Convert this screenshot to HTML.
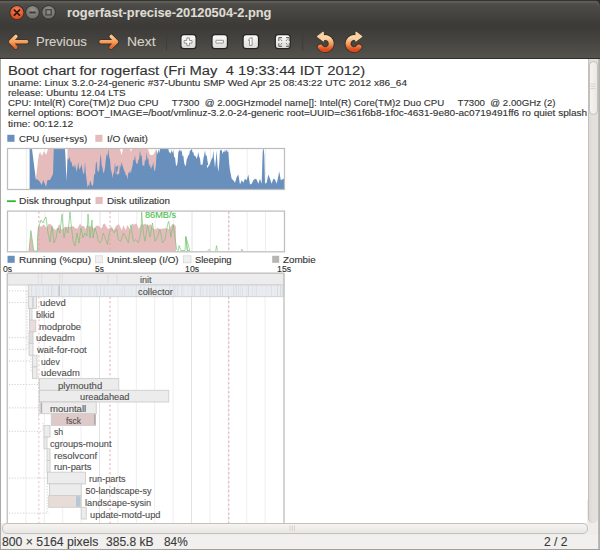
<!DOCTYPE html>
<html><head><meta charset="utf-8">
<style>
html,body{margin:0;padding:0;width:600px;height:550px;overflow:hidden;background:#3a3935;}
body{position:relative;font-family:"Liberation Sans",sans-serif;}
.abs{position:absolute;}
.t{position:absolute;white-space:pre;line-height:1;transform-origin:0 0;-webkit-text-stroke:0.12px currentColor;}
#titlebar{left:0;top:0;width:600px;height:26px;background:linear-gradient(#35342f 0px,#35342f 1px,#62615c 1px,#5a5954 2.5px,#4d4c48 4px,#3b3a36 26px);}
#toolbar{left:0;top:26px;width:600px;height:33px;background:linear-gradient(#3b3a36 0px,#43423e 12px,#4e4c47 24px,#55524d 31.5px,#302f2b 32px,#302f2b 33px);}
#content{left:1px;top:59px;width:587px;height:464px;background:#fff;overflow:hidden;}
#status{left:0;top:534px;width:600px;height:16px;background:#f1f0ee;}
#vtrough{left:588px;top:59px;width:10px;height:464px;background:linear-gradient(90deg,#dbd8d5 0px,#e2dfdc 3px,#e3e0dd 9px);border-left:1px solid #c3c0bc;box-sizing:border-box;border-radius:0 0 5px 5px;}
#vthumb{left:588.5px;top:60.5px;width:9px;height:54px;background:linear-gradient(90deg,#f4f3f1,#ebe9e6);border:1px solid #c4c1bc;box-sizing:border-box;border-radius:5px;}
#hbar{left:1.5px;top:523px;width:586px;height:10.5px;background:linear-gradient(#f5f4f2,#e9e7e4);border:1px solid #c4c1bc;box-sizing:border-box;border-radius:5px;}
#lborder{left:0;top:59px;width:1px;height:491px;background:#aaa9a7;}
#rborder{left:598px;top:59px;width:2px;height:491px;background:linear-gradient(90deg,#c4c1bd,#aeaaa6);}
#bborder{left:0;top:549px;width:600px;height:1px;background:#a19f9b;}
</style></head><body>
<div id="titlebar" class="abs"></div>
<div id="toolbar" class="abs"></div>
<div id="content" class="abs"></div>
<svg class="abs" style="left:0;top:0" width="600" height="550" viewBox="0 0 600 550">
<defs><clipPath id="cc"><rect x="1" y="59" width="587" height="464"/></clipPath></defs>
<g clip-path="url(#cc)">
<rect x="7.3" y="134.8" width="7.2" height="7" fill="#6990bd"/>
<rect x="95.3" y="134.8" width="7.2" height="7" fill="#e5bbbb"/>
<rect x="7" y="200.3" width="8.8" height="1.8" fill="#33b533"/>
<rect x="95.5" y="197" width="7.2" height="7" fill="#e5bbbb"/>
<rect x="7.5" y="255.8" width="7.2" height="7" fill="#6990bd"/>
<rect x="95.5" y="255.8" width="7" height="7" fill="#f0f0f0" stroke="#d8d8d8" stroke-width="0.8"/>
<rect x="183.5" y="255.8" width="7.5" height="7" fill="#f0f0f0" stroke="#d8d8d8" stroke-width="0.8"/>
<rect x="272.2" y="255.8" width="7" height="7" fill="#b5b5b5"/>
<line x1="26.40" y1="149" x2="26.40" y2="189" stroke="#eeeeee" stroke-width="1"/>
<line x1="44.80" y1="149" x2="44.80" y2="189" stroke="#eeeeee" stroke-width="1"/>
<line x1="63.20" y1="149" x2="63.20" y2="189" stroke="#eeeeee" stroke-width="1"/>
<line x1="81.60" y1="149" x2="81.60" y2="189" stroke="#eeeeee" stroke-width="1"/>
<line x1="100.00" y1="149" x2="100.00" y2="189" stroke="#e2e2e2" stroke-width="1"/>
<line x1="118.40" y1="149" x2="118.40" y2="189" stroke="#eeeeee" stroke-width="1"/>
<line x1="136.80" y1="149" x2="136.80" y2="189" stroke="#eeeeee" stroke-width="1"/>
<line x1="155.20" y1="149" x2="155.20" y2="189" stroke="#eeeeee" stroke-width="1"/>
<line x1="173.60" y1="149" x2="173.60" y2="189" stroke="#eeeeee" stroke-width="1"/>
<line x1="192.00" y1="149" x2="192.00" y2="189" stroke="#e2e2e2" stroke-width="1"/>
<line x1="210.40" y1="149" x2="210.40" y2="189" stroke="#eeeeee" stroke-width="1"/>
<line x1="228.80" y1="149" x2="228.80" y2="189" stroke="#eeeeee" stroke-width="1"/>
<line x1="247.20" y1="149" x2="247.20" y2="189" stroke="#eeeeee" stroke-width="1"/>
<line x1="265.60" y1="149" x2="265.60" y2="189" stroke="#eeeeee" stroke-width="1"/>
<polygon points="35.80,189.00 35.80,179.00 38.75,155.00 40.00,152.00 42.00,156.00 44.00,151.00 46.00,155.00 48.00,149.00 53.75,149.00 65.00,149.00 66.50,182.00 67.60,149.00 120.00,149.00 121.50,155.00 123.00,149.00 130.00,149.00 131.00,152.00 132.00,149.00 148.00,149.00 150.00,155.00 153.00,155.00 156.70,149.50 157.00,189.00" fill="#e5bbbb" />
<polygon points="29.60,189.00 29.60,149.00 32.00,149.00 35.80,179.00 38.30,180.00 40.00,182.00 41.70,185.00 43.30,180.00 46.00,187.00 47.50,180.00 50.00,180.00 53.00,174.00 53.75,149.00 65.00,149.00 66.50,182.00 67.60,158.70 68.40,160.12 69.20,156.72 70.00,158.67 70.83,162.55 71.67,162.00 72.50,167.29 73.33,165.33 74.17,168.25 75.00,163.67 75.83,168.23 76.67,172.00 77.50,167.08 78.33,162.00 79.17,169.94 80.00,167.83 80.83,167.31 81.67,163.67 82.50,170.07 83.33,173.67 84.17,173.39 85.00,161.17 85.83,173.57 86.67,180.33 87.50,187.44 88.33,184.50 89.17,186.52 90.00,180.53 90.83,182.00 91.67,184.99 92.50,186.17 93.33,183.73 94.17,173.67 95.00,174.71 95.83,163.45 96.67,161.17 97.50,171.03 98.33,172.00 99.17,169.92 100.00,159.55 100.83,153.67 101.67,165.30 102.50,167.83 103.33,173.46 104.17,172.00 105.00,167.70 105.83,159.67 106.67,153.67 107.50,156.36 108.33,148.67 109.17,156.92 110.00,159.50 110.83,170.06 111.67,172.00 112.50,178.11 113.33,173.67 114.17,172.12 115.00,162.00 115.83,172.53 116.67,172.00 117.50,171.04 118.33,165.33 115.00,167.83 115.83,174.72 116.67,172.00 117.50,175.50 118.33,173.67 119.17,174.28 120.00,163.67 120.83,168.11 121.67,162.00 122.50,165.50 123.33,167.83 124.17,170.73 125.00,172.00 125.83,174.97 126.67,175.33 127.50,179.46 128.33,172.00 129.17,173.78 130.00,170.33 130.83,173.26 131.67,168.67 132.50,165.89 133.33,159.50 134.17,160.46 135.00,155.33 135.83,161.82 136.67,163.67 137.50,164.11 138.33,160.33 139.17,158.84 140.00,150.33 140.83,156.34 141.67,155.33 142.50,165.76 143.33,165.33 144.17,166.51 145.00,159.50 145.83,161.32 146.67,152.00 147.50,160.06 148.33,157.83 149.17,166.70 150.00,163.67 150.83,169.36 151.67,167.00 152.50,165.48 153.33,162.00 154.17,171.33 155.00,170.33 155.83,165.70 156.67,149.50 157.50,154.72 158.33,149.00 159.17,153.16 160.00,148.67 160.00,148.67 168.33,148.67 169.17,152.82 170.00,152.00 170.83,153.72 171.67,149.50 172.50,153.10 173.33,150.33 174.17,157.44 175.00,157.00 175.83,164.54 176.67,166.17 177.50,162.77 178.33,152.00 179.17,150.87 180.00,149.50 180.83,151.78 181.67,150.33 182.50,156.61 183.33,155.33 184.17,162.93 185.00,165.33 185.83,166.02 186.67,159.50 187.50,157.87 188.33,155.33 189.17,154.71 190.00,150.33 190.83,150.49 191.67,148.67 192.50,152.51 193.33,152.00 194.17,155.96 195.00,155.33 195.83,157.05 196.67,158.67 197.50,156.20 198.33,152.00 199.17,156.45 200.00,158.67 200.83,165.25 201.67,164.50 202.50,164.65 203.33,158.67 204.17,155.14 205.00,150.33 205.83,156.02 206.67,155.33 207.50,160.89 208.33,165.33 206.67,165.33 207.50,168.22 208.33,166.17 209.17,165.42 210.00,163.67 210.83,161.17 211.67,158.67 212.50,157.99 213.33,150.33 214.17,159.92 215.00,167.83 215.83,159.95 216.67,150.33 217.50,165.10 218.33,172.00 219.17,164.24 220.00,149.50 220.83,150.66 221.67,149.50 222.50,154.18 223.33,151.17 224.17,152.49 225.00,149.50 225.83,152.21 226.67,149.50 227.50,151.57 228.33,152.00 229.17,163.67 230.00,170.33 231.67,178.67 233.33,180.33 235.00,182.83 236.67,177.00 238.33,174.50 240.00,184.50 241.67,180.33 243.33,182.83 245.00,178.67 246.67,180.33 248.33,174.50 250.00,184.50 251.67,183.67 253.33,180.33 255.00,178.67 256.67,179.50 258.33,183.67 260.00,178.67 261.67,183.67 262.67,152.00 263.17,148.67 263.67,148.67 264.33,155.33 265.00,183.67 266.67,182.83 268.33,174.50 270.00,178.67 271.67,183.67 273.33,178.67 275.00,179.50 276.67,183.67 278.33,176.17 279.17,171.17 280.83,180.33 283.33,178.67 284.00,178.70 284.00,189.00" fill="#6990bd" />
<rect x="7.5" y="148.5" width="277" height="41" fill="none" stroke="#bdbdbd" stroke-width="1.25"/>
<line x1="26.40" y1="211.6" x2="26.40" y2="251.3" stroke="#eeeeee" stroke-width="1"/>
<line x1="44.80" y1="211.6" x2="44.80" y2="251.3" stroke="#eeeeee" stroke-width="1"/>
<line x1="63.20" y1="211.6" x2="63.20" y2="251.3" stroke="#eeeeee" stroke-width="1"/>
<line x1="81.60" y1="211.6" x2="81.60" y2="251.3" stroke="#eeeeee" stroke-width="1"/>
<line x1="100.00" y1="211.6" x2="100.00" y2="251.3" stroke="#e2e2e2" stroke-width="1"/>
<line x1="118.40" y1="211.6" x2="118.40" y2="251.3" stroke="#eeeeee" stroke-width="1"/>
<line x1="136.80" y1="211.6" x2="136.80" y2="251.3" stroke="#eeeeee" stroke-width="1"/>
<line x1="155.20" y1="211.6" x2="155.20" y2="251.3" stroke="#eeeeee" stroke-width="1"/>
<line x1="173.60" y1="211.6" x2="173.60" y2="251.3" stroke="#eeeeee" stroke-width="1"/>
<line x1="192.00" y1="211.6" x2="192.00" y2="251.3" stroke="#e2e2e2" stroke-width="1"/>
<line x1="210.40" y1="211.6" x2="210.40" y2="251.3" stroke="#eeeeee" stroke-width="1"/>
<line x1="228.80" y1="211.6" x2="228.80" y2="251.3" stroke="#eeeeee" stroke-width="1"/>
<line x1="247.20" y1="211.6" x2="247.20" y2="251.3" stroke="#eeeeee" stroke-width="1"/>
<line x1="265.60" y1="211.6" x2="265.60" y2="251.3" stroke="#eeeeee" stroke-width="1"/>
<polygon points="29.00,251.30 30.90,230.60 33.80,251.30 37.40,251.30 37.60,228.00 38.60,226.47 41.60,226.46 43.60,224.59 46.60,227.71 48.60,223.96 51.00,224.29 52.60,227.47 55.60,230.05 57.60,227.66 59.20,223.72 61.20,229.46 62.80,228.75 65.20,226.38 67.20,226.93 69.60,226.80 71.20,226.50 73.60,226.15 75.20,228.25 77.60,228.61 80.00,223.51 81.60,226.10 84.00,226.01 85.60,229.23 87.20,224.79 88.80,226.59 91.80,226.24 93.80,228.75 96.20,225.66 98.60,225.63 101.60,228.61 103.20,224.24 104.80,223.38 107.80,228.88 109.80,228.07 111.80,226.43 113.80,230.20 115.80,226.23 118.80,224.12 121.80,230.23 123.40,225.19 125.80,230.29 127.40,224.77 130.40,230.27 132.00,223.59 134.00,224.79 136.40,223.37 138.80,229.11 141.80,223.81 143.40,224.76 145.40,223.41 147.80,225.90 150.80,224.19 153.80,229.13 155.80,229.37 157.80,227.69 160.20,229.66 162.20,228.38 164.20,228.48 166.20,228.11 169.20,229.48 170.80,226.25 172.40,224.06 174.80,224.97 175.80,226.50 176.00,251.30" fill="#e5bbbb" />
<polyline points="29.00,251.00 30.90,230.60 33.80,251.00 37.40,251.00 37.50,238.00 39.00,226.00 41.00,220.00 43.00,223.00 45.00,218.00 46.00,217.00 48.00,233.00 50.00,242.00 52.00,226.00 54.00,243.00 56.00,238.00 58.00,228.00 60.00,233.00 62.00,214.00 64.00,238.00 66.00,228.00 68.00,233.00 70.00,212.00 71.00,223.00 73.00,241.00 75.00,246.00 77.00,233.00 79.00,243.00 81.00,228.00 83.00,238.00 85.00,233.00 87.00,236.00 88.00,214.00 90.00,238.00 92.00,220.00 93.00,238.00 95.00,228.00 96.67,233.00 98.33,241.33 100.00,243.00 101.67,239.67 103.33,233.00 105.83,239.67 107.50,244.67 109.17,233.00 111.67,228.83 114.17,233.00 116.67,228.83 118.33,239.67 120.83,241.33 123.33,233.00 125.83,237.17 128.33,243.00 130.83,224.67 133.33,241.33 135.83,239.67 138.33,243.00 140.83,233.00 141.67,212.17 143.33,233.00 145.00,241.33 147.50,224.67 150.00,237.17 152.50,223.00 155.00,241.33 157.50,237.17 160.00,228.83 162.50,243.00 165.00,239.67 167.50,224.67 168.75,221.33 170.83,237.17 173.33,224.67 175.00,237.17 176.67,249.67 178.33,250.50 179.17,245.50 180.83,250.50 185.00,250.50 185.83,236.33 187.08,250.50 189.83,250.50 185.88,236.90 187.63,250.91" fill="none" stroke="#72c472" stroke-width="0.9" stroke-linejoin="round" stroke-opacity="0.75"/>
<polyline points="207.77,250.91 209.17,249.16 210.39,250.91" fill="none" stroke="#72c472" stroke-width="0.9" stroke-linejoin="round" stroke-opacity="0.75"/>
<polyline points="215.65,250.91 216.52,245.65 217.40,250.91" fill="none" stroke="#72c472" stroke-width="0.9" stroke-linejoin="round" stroke-opacity="0.75"/>
<polyline points="241.04,250.91 241.92,249.16 242.79,250.91" fill="none" stroke="#72c472" stroke-width="0.9" stroke-linejoin="round" stroke-opacity="0.75"/>
<line x1="38.9" y1="211.6" x2="38.9" y2="251.3" stroke="#e2a4a4" stroke-width="1" stroke-dasharray="2,2.5"/>
<line x1="110" y1="211.6" x2="110" y2="251.3" stroke="#e2a4a4" stroke-width="1" stroke-dasharray="2,2.5"/>
<line x1="228.8" y1="211.6" x2="228.8" y2="251.3" stroke="#e2a4a4" stroke-width="1" stroke-dasharray="2,2.5"/>
<rect x="7.5" y="211.1" width="277" height="40.70000000000002" fill="none" stroke="#bdbdbd" stroke-width="1.25"/>
<line x1="25.90" y1="273.3" x2="25.90" y2="550" stroke="#eeeeee" stroke-width="1"/>
<line x1="44.30" y1="273.3" x2="44.30" y2="550" stroke="#eeeeee" stroke-width="1"/>
<line x1="62.70" y1="273.3" x2="62.70" y2="550" stroke="#eeeeee" stroke-width="1"/>
<line x1="81.10" y1="273.3" x2="81.10" y2="550" stroke="#eeeeee" stroke-width="1"/>
<line x1="99.50" y1="273.3" x2="99.50" y2="550" stroke="#e2e2e2" stroke-width="1"/>
<line x1="117.90" y1="273.3" x2="117.90" y2="550" stroke="#eeeeee" stroke-width="1"/>
<line x1="136.30" y1="273.3" x2="136.30" y2="550" stroke="#eeeeee" stroke-width="1"/>
<line x1="154.70" y1="273.3" x2="154.70" y2="550" stroke="#eeeeee" stroke-width="1"/>
<line x1="173.10" y1="273.3" x2="173.10" y2="550" stroke="#eeeeee" stroke-width="1"/>
<line x1="191.50" y1="273.3" x2="191.50" y2="550" stroke="#e2e2e2" stroke-width="1"/>
<line x1="209.90" y1="273.3" x2="209.90" y2="550" stroke="#eeeeee" stroke-width="1"/>
<line x1="228.30" y1="273.3" x2="228.30" y2="550" stroke="#eeeeee" stroke-width="1"/>
<line x1="246.70" y1="273.3" x2="246.70" y2="550" stroke="#eeeeee" stroke-width="1"/>
<line x1="265.10" y1="273.3" x2="265.10" y2="550" stroke="#eeeeee" stroke-width="1"/>
<line x1="38.9" y1="296.7" x2="38.9" y2="550" stroke="#e8bcbc" stroke-width="1" stroke-dasharray="2,2.5"/>
<line x1="110" y1="296.7" x2="110" y2="550" stroke="#e2a4a4" stroke-width="1" stroke-dasharray="2,2.5"/>
<line x1="228.8" y1="296.7" x2="228.8" y2="550" stroke="#e2a4a4" stroke-width="1" stroke-dasharray="2,2.5"/>
<line x1="9" y1="290.85" x2="28.3" y2="290.85" stroke="#c4c4c4" stroke-width="0.8" stroke-dasharray="1.2,1.6"/>
<line x1="9" y1="302.55" x2="27" y2="302.55" stroke="#c4c4c4" stroke-width="0.8" stroke-dasharray="1.2,1.6"/>
<line x1="9" y1="337.65" x2="28" y2="337.65" stroke="#c4c4c4" stroke-width="0.8" stroke-dasharray="1.2,1.6"/>
<line x1="9" y1="349.35" x2="28" y2="349.35" stroke="#c4c4c4" stroke-width="0.8" stroke-dasharray="1.2,1.6"/>
<line x1="9" y1="361.05" x2="31" y2="361.05" stroke="#c4c4c4" stroke-width="0.8" stroke-dasharray="1.2,1.6"/>
<line x1="9" y1="384.45" x2="38.5" y2="384.45" stroke="#c4c4c4" stroke-width="0.8" stroke-dasharray="1.2,1.6"/>
<line x1="9" y1="407.85" x2="40" y2="407.85" stroke="#c4c4c4" stroke-width="0.8" stroke-dasharray="1.2,1.6"/>
<line x1="9" y1="431.25" x2="43" y2="431.25" stroke="#c4c4c4" stroke-width="0.8" stroke-dasharray="1.2,1.6"/>
<line x1="9" y1="478.05" x2="46.5" y2="478.05" stroke="#c4c4c4" stroke-width="0.8" stroke-dasharray="1.2,1.6"/>
<line x1="9" y1="513.15" x2="48.5" y2="513.15" stroke="#c4c4c4" stroke-width="0.8" stroke-dasharray="1.2,1.6"/>
<line x1="27" y1="290.85" x2="27" y2="349.35" stroke="#c8c8c8" stroke-width="0.8" stroke-dasharray="1.2,1.6"/>
<line x1="31" y1="352.86" x2="31" y2="372.75" stroke="#c8c8c8" stroke-width="0.8" stroke-dasharray="1.2,1.6"/>
<line x1="38.5" y1="376.26" x2="38.5" y2="419.55" stroke="#c8c8c8" stroke-width="0.8" stroke-dasharray="1.2,1.6"/>
<line x1="43" y1="423.06" x2="43" y2="431.25" stroke="#c8c8c8" stroke-width="0.8" stroke-dasharray="1.2,1.6"/>
<line x1="47.2" y1="466.35" x2="47.2" y2="513.15" stroke="#c8c8c8" stroke-width="0.8" stroke-dasharray="1.2,1.6"/>
<rect x="7.40" y="273.30" width="276.60" height="11.70" fill="#ececec" stroke="#cdcdcd" stroke-width="0.9"/>
<rect x="28.30" y="285.00" width="255.70" height="11.70" fill="#e9ecf0" stroke="#cdcdcd" stroke-width="0.9"/>
<rect x="28.50" y="296.70" width="8.00" height="11.70" fill="#ececec" stroke="#cdcdcd" stroke-width="0.9"/>
<rect x="29.50" y="308.40" width="2.50" height="11.70" fill="#ececec" stroke="#cdcdcd" stroke-width="0.9"/>
<rect x="29.50" y="320.10" width="6.30" height="11.70" fill="#eadcdc" stroke="#cdcdcd" stroke-width="0.9"/>
<rect x="29.00" y="331.80" width="4.00" height="11.70" fill="#dedede" stroke="#cdcdcd" stroke-width="0.9"/>
<rect x="29.00" y="343.50" width="4.00" height="11.70" fill="#ececec" stroke="#cdcdcd" stroke-width="0.9"/>
<rect x="32.50" y="355.20" width="4.50" height="11.70" fill="#ececec" stroke="#cdcdcd" stroke-width="0.9"/>
<rect x="32.50" y="366.90" width="4.50" height="11.70" fill="#ececec" stroke="#cdcdcd" stroke-width="0.9"/>
<rect x="39.50" y="378.60" width="79.25" height="11.70" fill="#ececec" stroke="#cdcdcd" stroke-width="0.9"/>
<rect x="39.50" y="390.30" width="129.25" height="11.70" fill="#ececec" stroke="#cdcdcd" stroke-width="0.9"/>
<rect x="39.80" y="402.00" width="56.45" height="11.70" fill="#ececec" stroke="#cdcdcd" stroke-width="0.9"/>
<rect x="51.25" y="413.70" width="44.25" height="11.70" fill="#dfc8c8" stroke="#cdcdcd" stroke-width="0.9"/>
<rect x="44.00" y="425.40" width="6.00" height="11.70" fill="#ececec" stroke="#cdcdcd" stroke-width="0.9"/>
<rect x="44.00" y="437.10" width="3.00" height="11.70" fill="#ececec" stroke="#cdcdcd" stroke-width="0.9"/>
<rect x="47.00" y="448.80" width="3.00" height="11.70" fill="#ececec" stroke="#cdcdcd" stroke-width="0.9"/>
<rect x="47.00" y="460.50" width="3.00" height="11.70" fill="#ececec" stroke="#cdcdcd" stroke-width="0.9"/>
<rect x="47.50" y="472.20" width="38.00" height="11.70" fill="#ececec" stroke="#cdcdcd" stroke-width="0.9"/>
<rect x="49.50" y="483.90" width="31.75" height="11.70" fill="#ececec" stroke="#cdcdcd" stroke-width="0.9"/>
<rect x="48.75" y="495.60" width="32.50" height="11.70" fill="#e8dcd8" stroke="#cdcdcd" stroke-width="0.9"/>
<rect x="81.25" y="507.30" width="5.00" height="11.70" fill="#ececec" stroke="#cdcdcd" stroke-width="0.9"/>
<line x1="29.50" y1="285.60" x2="29.50" y2="296.10" stroke="#e2e4e6" stroke-width="0.8"/>
<line x1="31.70" y1="285.60" x2="31.70" y2="296.10" stroke="#d3d6da" stroke-width="0.8"/>
<line x1="35.90" y1="285.60" x2="35.90" y2="296.10" stroke="#d8dadd" stroke-width="0.8"/>
<line x1="37.70" y1="285.60" x2="37.70" y2="296.10" stroke="#e5e7e9" stroke-width="0.8"/>
<line x1="39.50" y1="285.60" x2="39.50" y2="296.10" stroke="#e2e4e6" stroke-width="0.8"/>
<line x1="43.10" y1="285.60" x2="43.10" y2="296.10" stroke="#d8dadd" stroke-width="0.8"/>
<line x1="46.70" y1="285.60" x2="46.70" y2="296.10" stroke="#dcdfe2" stroke-width="0.8"/>
<line x1="48.50" y1="285.60" x2="48.50" y2="296.10" stroke="#d8dadd" stroke-width="0.8"/>
<line x1="51.50" y1="285.60" x2="51.50" y2="296.10" stroke="#d3d6da" stroke-width="0.8"/>
<line x1="53.30" y1="285.60" x2="53.30" y2="296.10" stroke="#dcdfe2" stroke-width="0.8"/>
<line x1="55.10" y1="285.60" x2="55.10" y2="296.10" stroke="#e5e7e9" stroke-width="0.8"/>
<line x1="58.10" y1="285.60" x2="58.10" y2="296.10" stroke="#d8dadd" stroke-width="0.8"/>
<line x1="61.70" y1="285.60" x2="61.70" y2="296.10" stroke="#d8dadd" stroke-width="0.8"/>
<line x1="63.90" y1="285.60" x2="63.90" y2="296.10" stroke="#e5e7e9" stroke-width="0.8"/>
<line x1="65.70" y1="285.60" x2="65.70" y2="296.10" stroke="#e5e7e9" stroke-width="0.8"/>
<line x1="69.30" y1="285.60" x2="69.30" y2="296.10" stroke="#d3d6da" stroke-width="0.8"/>
<line x1="71.10" y1="285.60" x2="71.10" y2="296.10" stroke="#dcdfe2" stroke-width="0.8"/>
<line x1="72.90" y1="285.60" x2="72.90" y2="296.10" stroke="#e5e7e9" stroke-width="0.8"/>
<line x1="75.10" y1="285.60" x2="75.10" y2="296.10" stroke="#e2e4e6" stroke-width="0.8"/>
<line x1="78.10" y1="285.60" x2="78.10" y2="296.10" stroke="#dcdfe2" stroke-width="0.8"/>
<line x1="81.70" y1="285.60" x2="81.70" y2="296.10" stroke="#d8dadd" stroke-width="0.8"/>
<line x1="85.30" y1="285.60" x2="85.30" y2="296.10" stroke="#e2e4e6" stroke-width="0.8"/>
<line x1="88.90" y1="285.60" x2="88.90" y2="296.10" stroke="#dcdfe2" stroke-width="0.8"/>
<line x1="90.70" y1="285.60" x2="90.70" y2="296.10" stroke="#e5e7e9" stroke-width="0.8"/>
<line x1="94.30" y1="285.60" x2="94.30" y2="296.10" stroke="#dcdfe2" stroke-width="0.8"/>
<line x1="96.90" y1="285.60" x2="96.90" y2="296.10" stroke="#d8dadd" stroke-width="0.8"/>
<line x1="100.50" y1="285.60" x2="100.50" y2="296.10" stroke="#d8dadd" stroke-width="0.8"/>
<line x1="104.10" y1="285.60" x2="104.10" y2="296.10" stroke="#d8dadd" stroke-width="0.8"/>
<line x1="107.70" y1="285.60" x2="107.70" y2="296.10" stroke="#dcdfe2" stroke-width="0.8"/>
<line x1="110.70" y1="285.60" x2="110.70" y2="296.10" stroke="#e5e7e9" stroke-width="0.8"/>
<line x1="113.70" y1="285.60" x2="113.70" y2="296.10" stroke="#e2e4e6" stroke-width="0.8"/>
<line x1="116.70" y1="285.60" x2="116.70" y2="296.10" stroke="#e5e7e9" stroke-width="0.8"/>
<line x1="119.70" y1="285.60" x2="119.70" y2="296.10" stroke="#e2e4e6" stroke-width="0.8"/>
<line x1="122.30" y1="285.60" x2="122.30" y2="296.10" stroke="#dcdfe2" stroke-width="0.8"/>
<line x1="124.50" y1="285.60" x2="124.50" y2="296.10" stroke="#dcdfe2" stroke-width="0.8"/>
<line x1="126.30" y1="285.60" x2="126.30" y2="296.10" stroke="#e5e7e9" stroke-width="0.8"/>
<line x1="128.90" y1="285.60" x2="128.90" y2="296.10" stroke="#e5e7e9" stroke-width="0.8"/>
<line x1="131.90" y1="285.60" x2="131.90" y2="296.10" stroke="#e2e4e6" stroke-width="0.8"/>
<line x1="136.10" y1="285.60" x2="136.10" y2="296.10" stroke="#d3d6da" stroke-width="0.8"/>
<line x1="138.70" y1="285.60" x2="138.70" y2="296.10" stroke="#e5e7e9" stroke-width="0.8"/>
<line x1="140.50" y1="285.60" x2="140.50" y2="296.10" stroke="#d8dadd" stroke-width="0.8"/>
<line x1="144.10" y1="285.60" x2="144.10" y2="296.10" stroke="#d3d6da" stroke-width="0.8"/>
<line x1="146.30" y1="285.60" x2="146.30" y2="296.10" stroke="#e2e4e6" stroke-width="0.8"/>
<line x1="148.50" y1="285.60" x2="148.50" y2="296.10" stroke="#d3d6da" stroke-width="0.8"/>
<line x1="151.50" y1="285.60" x2="151.50" y2="296.10" stroke="#d8dadd" stroke-width="0.8"/>
<line x1="155.70" y1="285.60" x2="155.70" y2="296.10" stroke="#d8dadd" stroke-width="0.8"/>
<line x1="159.30" y1="285.60" x2="159.30" y2="296.10" stroke="#e5e7e9" stroke-width="0.8"/>
<line x1="161.90" y1="285.60" x2="161.90" y2="296.10" stroke="#e2e4e6" stroke-width="0.8"/>
<line x1="166.10" y1="285.60" x2="166.10" y2="296.10" stroke="#e2e4e6" stroke-width="0.8"/>
<line x1="169.70" y1="285.60" x2="169.70" y2="296.10" stroke="#d3d6da" stroke-width="0.8"/>
<line x1="173.30" y1="285.60" x2="173.30" y2="296.10" stroke="#d3d6da" stroke-width="0.8"/>
<line x1="175.10" y1="285.60" x2="175.10" y2="296.10" stroke="#d8dadd" stroke-width="0.8"/>
<line x1="177.70" y1="285.60" x2="177.70" y2="296.10" stroke="#d3d6da" stroke-width="0.8"/>
<line x1="181.90" y1="285.60" x2="181.90" y2="296.10" stroke="#d8dadd" stroke-width="0.8"/>
<line x1="183.70" y1="285.60" x2="183.70" y2="296.10" stroke="#e2e4e6" stroke-width="0.8"/>
<line x1="187.90" y1="285.60" x2="187.90" y2="296.10" stroke="#e5e7e9" stroke-width="0.8"/>
<line x1="192.10" y1="285.60" x2="192.10" y2="296.10" stroke="#d3d6da" stroke-width="0.8"/>
<line x1="194.70" y1="285.60" x2="194.70" y2="296.10" stroke="#d3d6da" stroke-width="0.8"/>
<line x1="198.90" y1="285.60" x2="198.90" y2="296.10" stroke="#e2e4e6" stroke-width="0.8"/>
<line x1="200.70" y1="285.60" x2="200.70" y2="296.10" stroke="#d3d6da" stroke-width="0.8"/>
<line x1="203.30" y1="285.60" x2="203.30" y2="296.10" stroke="#dcdfe2" stroke-width="0.8"/>
<line x1="206.90" y1="285.60" x2="206.90" y2="296.10" stroke="#d8dadd" stroke-width="0.8"/>
<line x1="209.90" y1="285.60" x2="209.90" y2="296.10" stroke="#d8dadd" stroke-width="0.8"/>
<line x1="212.10" y1="285.60" x2="212.10" y2="296.10" stroke="#e2e4e6" stroke-width="0.8"/>
<line x1="214.30" y1="285.60" x2="214.30" y2="296.10" stroke="#dcdfe2" stroke-width="0.8"/>
<line x1="217.30" y1="285.60" x2="217.30" y2="296.10" stroke="#d3d6da" stroke-width="0.8"/>
<line x1="220.30" y1="285.60" x2="220.30" y2="296.10" stroke="#d8dadd" stroke-width="0.8"/>
<line x1="222.50" y1="285.60" x2="222.50" y2="296.10" stroke="#d3d6da" stroke-width="0.8"/>
<line x1="225.50" y1="285.60" x2="225.50" y2="296.10" stroke="#e5e7e9" stroke-width="0.8"/>
<line x1="228.10" y1="285.60" x2="228.10" y2="296.10" stroke="#dcdfe2" stroke-width="0.8"/>
<line x1="231.10" y1="285.60" x2="231.10" y2="296.10" stroke="#e5e7e9" stroke-width="0.8"/>
<line x1="233.70" y1="285.60" x2="233.70" y2="296.10" stroke="#d3d6da" stroke-width="0.8"/>
<line x1="236.30" y1="285.60" x2="236.30" y2="296.10" stroke="#d3d6da" stroke-width="0.8"/>
<line x1="238.50" y1="285.60" x2="238.50" y2="296.10" stroke="#dcdfe2" stroke-width="0.8"/>
<line x1="240.30" y1="285.60" x2="240.30" y2="296.10" stroke="#dcdfe2" stroke-width="0.8"/>
<line x1="242.50" y1="285.60" x2="242.50" y2="296.10" stroke="#dcdfe2" stroke-width="0.8"/>
<line x1="246.70" y1="285.60" x2="246.70" y2="296.10" stroke="#dcdfe2" stroke-width="0.8"/>
<line x1="248.50" y1="285.60" x2="248.50" y2="296.10" stroke="#d3d6da" stroke-width="0.8"/>
<line x1="252.10" y1="285.60" x2="252.10" y2="296.10" stroke="#dcdfe2" stroke-width="0.8"/>
<line x1="254.70" y1="285.60" x2="254.70" y2="296.10" stroke="#e2e4e6" stroke-width="0.8"/>
<line x1="256.50" y1="285.60" x2="256.50" y2="296.10" stroke="#dcdfe2" stroke-width="0.8"/>
<line x1="259.50" y1="285.60" x2="259.50" y2="296.10" stroke="#e5e7e9" stroke-width="0.8"/>
<line x1="262.10" y1="285.60" x2="262.10" y2="296.10" stroke="#e5e7e9" stroke-width="0.8"/>
<line x1="265.70" y1="285.60" x2="265.70" y2="296.10" stroke="#e2e4e6" stroke-width="0.8"/>
<line x1="267.90" y1="285.60" x2="267.90" y2="296.10" stroke="#e5e7e9" stroke-width="0.8"/>
<line x1="271.50" y1="285.60" x2="271.50" y2="296.10" stroke="#d8dadd" stroke-width="0.8"/>
<line x1="274.50" y1="285.60" x2="274.50" y2="296.10" stroke="#e5e7e9" stroke-width="0.8"/>
<line x1="277.50" y1="285.60" x2="277.50" y2="296.10" stroke="#d3d6da" stroke-width="0.8"/>
<line x1="280.50" y1="285.60" x2="280.50" y2="296.10" stroke="#d3d6da" stroke-width="0.8"/>
<line x1="282.30" y1="285.60" x2="282.30" y2="296.10" stroke="#d3d6da" stroke-width="0.8"/>
<line x1="38.30" y1="273.90" x2="38.30" y2="284.40" stroke="#dcdcdc" stroke-width="0.8"/>
<line x1="41.70" y1="273.90" x2="41.70" y2="284.40" stroke="#dcdcdc" stroke-width="0.8"/>
<line x1="59.70" y1="273.90" x2="59.70" y2="284.40" stroke="#dcdcdc" stroke-width="0.8"/>
<line x1="62.30" y1="273.90" x2="62.30" y2="284.40" stroke="#dcdcdc" stroke-width="0.8"/>
<line x1="108.00" y1="273.90" x2="108.00" y2="284.40" stroke="#dcdcdc" stroke-width="0.8"/>
<line x1="117.00" y1="273.90" x2="117.00" y2="284.40" stroke="#dcdcdc" stroke-width="0.8"/>
<line x1="59.2" y1="285.60" x2="59.2" y2="296.10" stroke="#b8c0c8" stroke-width="1.2"/>
<line x1="41.4" y1="402.60" x2="41.4" y2="413.10" stroke="#b4b4b4" stroke-width="1.6"/>
<line x1="94.8" y1="414.30" x2="94.8" y2="424.80" stroke="#a8a8a8" stroke-width="1.4"/>
<rect x="76" y="496.20" width="4.5" height="10.50" fill="#b9c6d6"/>
<line x1="33" y1="297.30" x2="33" y2="307.80" stroke="#c4c4c4" stroke-width="1.2"/>
<line x1="7.3" y1="273.3" x2="7.3" y2="550" stroke="#c6c6c6" stroke-width="1.5"/>
<line x1="284" y1="273.3" x2="284" y2="550" stroke="#c6c6c6" stroke-width="1.5"/>
<line x1="7.3" y1="273.3" x2="284" y2="273.3" stroke="#c6c6c6" stroke-width="1.5"/>
</g></svg>
<div id="status" class="abs"></div>
<div class="abs" style="left:0;top:523px;width:600px;height:12px;background:#efedeb;"></div><div class="abs" style="left:587px;top:500px;width:12px;height:30px;background:#efedeb;"></div>
<div id="vtrough" class="abs"></div>
<div id="vthumb" class="abs"></div>
<div id="hbar" class="abs"></div>
<div id="lborder" class="abs"></div>
<div id="rborder" class="abs"></div>
<div id="bborder" class="abs"></div>
<svg class="abs" style="left:0;top:0" width="600" height="550" viewBox="0 0 600 550">
<g stroke="#cfccc8" stroke-width="0.8"><line x1="590.5" y1="84" x2="595.5" y2="84"/><line x1="590.5" y1="86.3" x2="595.5" y2="86.3"/><line x1="590.5" y1="88.6" x2="595.5" y2="88.6"/>
<line x1="290" y1="525.5" x2="290" y2="531"/><line x1="292.3" y1="525.5" x2="292.3" y2="531"/><line x1="294.6" y1="525.5" x2="294.6" y2="531"/></g>
</svg>
<svg class="abs" style="left:0;top:0" width="600" height="60" viewBox="0 0 600 60">
<defs>
<radialGradient id="gclose" cx="50%" cy="35%" r="65%"><stop offset="0" stop-color="#f88a62"/><stop offset="1" stop-color="#d9461c"/></radialGradient>
<radialGradient id="ggrey" cx="50%" cy="35%" r="65%"><stop offset="0" stop-color="#96958f"/><stop offset="1" stop-color="#6e6d68"/></radialGradient>
<linearGradient id="garrow" x1="0" y1="0" x2="0" y2="1"><stop offset="0" stop-color="#fbc68c"/><stop offset="0.55" stop-color="#f59a55"/><stop offset="1" stop-color="#e8652a"/></linearGradient>
<linearGradient id="grot" x1="0" y1="0" x2="0" y2="1"><stop offset="0" stop-color="#fbd7a8"/><stop offset="0.5" stop-color="#f3a060"/><stop offset="1" stop-color="#e24a18"/></linearGradient>
<linearGradient id="gbtn" x1="0" y1="0" x2="0" y2="1"><stop offset="0" stop-color="#fbfbfa"/><stop offset="1" stop-color="#dcdbd8"/></linearGradient>
</defs>
<path d="M594,0 H600 V6 A6,6 0 0 0 594,0 Z" fill="#2c2b28"/>
<path d="M588,1.5 H594 A4.5,4.5 0 0 1 598.5,6" fill="none" stroke="#5e5d58" stroke-width="1"/>
<!-- window buttons -->
<circle cx="16.9" cy="12.6" r="7.4" fill="#2f2e2a"/>
<circle cx="16.9" cy="12.6" r="6.6" fill="url(#gclose)"/>
<path d="M14.4,10.1 L19.4,15.1 M19.4,10.1 L14.4,15.1" stroke="#3e160a" stroke-width="1.9" stroke-linecap="round"/>
<circle cx="32.5" cy="12.3" r="7.1" fill="#33322e"/>
<circle cx="32.5" cy="12.3" r="6.3" fill="url(#ggrey)"/>
<path d="M29.4,12.5 L35.6,12.5" stroke="#3a3935" stroke-width="1.8"/>
<circle cx="48.6" cy="12.3" r="7.1" fill="#33322e"/>
<circle cx="48.6" cy="12.3" r="6.3" fill="url(#ggrey)"/>
<rect x="46" y="9.7" width="5.2" height="5.2" fill="none" stroke="#4a4945" stroke-width="1.4"/>
<!-- arrows -->
<g stroke="#2a1a10" stroke-opacity="0.4" stroke-width="5.2" stroke-linecap="round" stroke-linejoin="round" fill="none">
<path d="M15.9,36.4 L10.6,41.8 L15.8,47.2 M11,41.8 L26.6,41.8"/>
<path d="M111.2,36.4 L116.5,41.8 L111,47.2 M101,41.8 L116,41.8"/>
</g>
<g stroke="url(#garrow)" stroke-width="3.5" stroke-linecap="round" stroke-linejoin="round" fill="none">
<path d="M15.9,36.4 L10.6,41.8 L15.8,47.2 M11,41.8 L26.6,41.8"/>
<path d="M111.2,36.4 L116.5,41.8 L111,47.2 M101,41.8 L116,41.8"/>
</g>
<!-- separators -->
<line x1="166.5" y1="32" x2="166.5" y2="50.5" stroke="#3e3d39" stroke-width="1"/>
<line x1="302.8" y1="32" x2="302.8" y2="50.5" stroke="#3e3d39" stroke-width="1"/>
<!-- zoom buttons -->
<g stroke="#262521" stroke-width="1.2">
<rect x="180.9" y="34.7" width="15.2" height="14" rx="3" fill="url(#gbtn)"/>
<rect x="212" y="34.7" width="15.4" height="14" rx="3" fill="url(#gbtn)"/>
<rect x="243.1" y="34.7" width="15.4" height="14" rx="3" fill="url(#gbtn)"/>
<rect x="275.3" y="34.7" width="15" height="14" rx="3" fill="url(#gbtn)"/>
</g>
<g fill="#ffffff" stroke="#8a8985" stroke-width="0.9">
<path d="M186.8,37.9 h2.6 v2.6 h2.6 v2.6 h-2.6 v2.6 h-2.6 v-2.6 h-2.6 v-2.6 h2.6 z"/>
<rect x="215.9" y="40.3" width="7.6" height="2.8" rx="0.5"/>
<path d="M249.4,38.4 l2.7,-0.8 v7.8 h-2.6 v-5.2 l-1,0.3 z"/>
</g>
<g fill="none" stroke="#6a6965" stroke-width="1.1">
<path d="M278.8,41 v-2.8 q0,-0.6 0.6,-0.6 h2.6 M286.1,37.6 h2.6 q0.6,0 0.6,0.6 v2.8 M289.3,43.2 v2.6 q0,0.6 -0.6,0.6 h-2.6 M282,46.4 h-2.6 q-0.6,0 -0.6,-0.6 v-2.6"/>
<path d="M280.6,39.4 l1.6,1.6 M287.5,39.4 l-1.6,1.6 M287.5,44.6 l-1.6,-1.6 M280.6,44.6 l1.6,-1.6" stroke-width="0.9"/>
</g>
<!-- rotate icons -->
<g fill="none" stroke-linecap="round">
<path d="M323.15,37.96 A6.0,6.0 0 1 1 320.29,47.04" stroke="#2c1a10" stroke-opacity="0.45" stroke-width="7"/>
<path d="M323.15,37.96 A6.0,6.0 0 1 1 320.29,47.04" stroke="url(#grot)" stroke-width="5"/>
<path d="M356.15,37.96 A6.0,6.0 0 1 0 359.01,47.04" stroke="#2c1a10" stroke-opacity="0.45" stroke-width="7"/>
<path d="M356.15,37.96 A6.0,6.0 0 1 0 359.01,47.04" stroke="url(#grot)" stroke-width="5"/>
</g>
<path d="M317.6,36.6 L323.2,32.3 L323.5,41 Z" fill="#fbd3a3" stroke="#fbd3a3" stroke-width="1.2" stroke-linejoin="round"/>
<path d="M361.70,36.6 L356.10,32.3 L355.80,41 Z" fill="#fbd3a3" stroke="#fbd3a3" stroke-width="1.2" stroke-linejoin="round"/>
</svg>
<div class="t" style="left:66.50px;top:5.50px;font-size:13px;color:#dfdbd2;font-weight:bold;transform:scaleX(0.9859);">rogerfast-precise-20120504-2.png</div>
<div class="t" style="left:36.26px;top:35.62px;font-size:12.5px;color:#d6d2c9;transform:scaleX(1.0447);">Previous</div>
<div class="t" style="left:127.39px;top:35.62px;font-size:12.5px;color:#d6d2c9;transform:scaleX(1.1098);">Next</div>
<div class="t" style="left:1.80px;top:536.13px;font-size:12.6px;color:#3a3a3a;transform:scaleX(0.9719);">800 × 5164 pixels</div>
<div class="t" style="left:105.80px;top:536.13px;font-size:12.6px;color:#3a3a3a;transform:scaleX(0.9572);">385.8 kB</div>
<div class="t" style="left:164.00px;top:536.13px;font-size:12.6px;color:#3a3a3a;transform:scaleX(0.9397);">84%</div>
<div class="t" style="left:543.80px;top:536.13px;font-size:12.6px;color:#3a3a3a;transform:scaleX(0.9591);">2 / 2</div>
<div class="t" style="left:7.60px;top:65.34px;font-size:12px;color:#333333;transform:scaleX(1.2319);">Boot chart for rogerfast (Fri May  4 19:33:44 IDT 2012)</div>
<div class="t" style="left:7.60px;top:78.64px;font-size:8.7px;color:#333333;transform:scaleX(1.1616);">uname: Linux 3.2.0-24-generic #37-Ubuntu SMP Wed Apr 25 08:43:22 UTC 2012 x86_64</div>
<div class="t" style="left:7.60px;top:88.64px;font-size:8.7px;color:#333333;transform:scaleX(1.1403);">release: Ubuntu 12.04 LTS</div>
<div class="t" style="left:7.60px;top:98.94px;font-size:8.7px;color:#333333;transform:scaleX(1.1142);white-space:pre;">CPU: Intel(R) Core(TM)2 Duo CPU     T7300  @ 2.00GHzmodel name[]: Intel(R) Core(TM)2 Duo CPU     T7300  @ 2.00GHz (2)</div>
<div class="t" style="left:7.60px;top:109.34px;font-size:8.7px;color:#333333;transform:scaleX(1.1553);">kernel options: BOOT_IMAGE=/boot/vmlinuz-3.2.0-24-generic root=UUID=c361f6b8-1f0c-4631-9e80-ac0719491ff6 ro quiet splash</div>
<div class="t" style="left:7.60px;top:119.64px;font-size:8.7px;color:#333333;transform:scaleX(1.1843);">time: 00:12.12</div>
<div class="t" style="left:18.50px;top:134.58px;font-size:9px;color:#333333;transform:scaleX(1.0696);">CPU (user+sys)</div>
<div class="t" style="left:106.70px;top:134.58px;font-size:9px;color:#333333;transform:scaleX(1.1177);">I/O (wait)</div>
<div class="t" style="left:18.50px;top:196.88px;font-size:9px;color:#333333;transform:scaleX(1.1364);">Disk throughput</div>
<div class="t" style="left:106.70px;top:196.88px;font-size:9px;color:#333333;transform:scaleX(1.0954);">Disk utilization</div>
<div class="t" style="left:145.40px;top:211.28px;font-size:9px;color:#4cbf4c;transform:scaleX(1.0190);">86MB/s</div>
<div class="t" style="left:18.50px;top:255.88px;font-size:9px;color:#333333;transform:scaleX(1.1156);">Running (%cpu)</div>
<div class="t" style="left:106.70px;top:255.88px;font-size:9px;color:#333333;transform:scaleX(1.0927);">Unint.sleep (I/O)</div>
<div class="t" style="left:195.20px;top:255.88px;font-size:9px;color:#333333;transform:scaleX(1.0450);">Sleeping</div>
<div class="t" style="left:282.70px;top:255.88px;font-size:9px;color:#333333;transform:scaleX(1.0865);">Zombie</div>
<div class="t" style="left:3.30px;top:265.47px;font-size:8.3px;color:#333333;transform:scaleX(1.0448);">0s</div>
<div class="t" style="left:95.00px;top:265.47px;font-size:8.3px;color:#333333;transform:scaleX(1.0099);">5s</div>
<div class="t" style="left:184.70px;top:265.47px;font-size:8.3px;color:#333333;transform:scaleX(1.0583);">10s</div>
<div class="t" style="left:276.80px;top:265.47px;font-size:8.3px;color:#333333;transform:scaleX(1.0583);">15s</div>
<div class="t" style="left:140.00px;top:276.08px;font-size:9px;color:#505050;">init</div>
<div class="t" style="left:138.00px;top:287.78px;font-size:9px;color:#505050;transform:scaleX(1.0383);">collector</div>
<div class="t" style="left:40.00px;top:299.08px;font-size:9px;color:#505050;transform:scaleX(1.0524);">udevd</div>
<div class="t" style="left:35.80px;top:310.88px;font-size:9px;color:#505050;transform:scaleX(0.9944);">blkid</div>
<div class="t" style="left:39.20px;top:322.58px;font-size:9px;color:#505050;transform:scaleX(1.0365);">modprobe</div>
<div class="t" style="left:35.80px;top:334.28px;font-size:9px;color:#505050;transform:scaleX(1.0513);">udevadm</div>
<div class="t" style="left:36.53px;top:345.98px;font-size:9px;color:#505050;transform:scaleX(1.0341);">wait-for-root</div>
<div class="t" style="left:40.50px;top:357.68px;font-size:9px;color:#505050;transform:scaleX(0.9592);">udev</div>
<div class="t" style="left:40.50px;top:369.38px;font-size:9px;color:#505050;transform:scaleX(1.0458);">udevadm</div>
<div class="t" style="left:57.50px;top:381.78px;font-size:9px;color:#505050;transform:scaleX(1.0646);">plymouthd</div>
<div class="t" style="left:80.00px;top:393.28px;font-size:9px;color:#505050;transform:scaleX(1.0304);">ureadahead</div>
<div class="t" style="left:50.00px;top:404.88px;font-size:9px;color:#505050;transform:scaleX(1.0641);">mountall</div>
<div class="t" style="left:65.70px;top:416.68px;font-size:9px;color:#505050;transform:scaleX(0.9394);">fsck</div>
<div class="t" style="left:54.40px;top:428.38px;font-size:9px;color:#505050;transform:scaleX(0.9684);">sh</div>
<div class="t" style="left:50.00px;top:440.08px;font-size:9px;color:#505050;transform:scaleX(1.0243);">cgroups-mount</div>
<div class="t" style="left:54.40px;top:451.78px;font-size:9px;color:#505050;transform:scaleX(1.0501);">resolvconf</div>
<div class="t" style="left:54.40px;top:463.48px;font-size:9px;color:#505050;transform:scaleX(1.0407);">run-parts</div>
<div class="t" style="left:89.20px;top:475.48px;font-size:9px;color:#505050;transform:scaleX(1.0133);">run-parts</div>
<div class="t" style="left:85.50px;top:487.18px;font-size:9px;color:#505050;">50-landscape-sy</div>
<div class="t" style="left:85.00px;top:499.08px;font-size:9px;color:#505050;transform:scaleX(1.0259);">landscape-sysin</div>
<div class="t" style="left:90.00px;top:510.88px;font-size:9px;color:#505050;transform:scaleX(1.0286);">update-motd-upd</div>
</body></html>
